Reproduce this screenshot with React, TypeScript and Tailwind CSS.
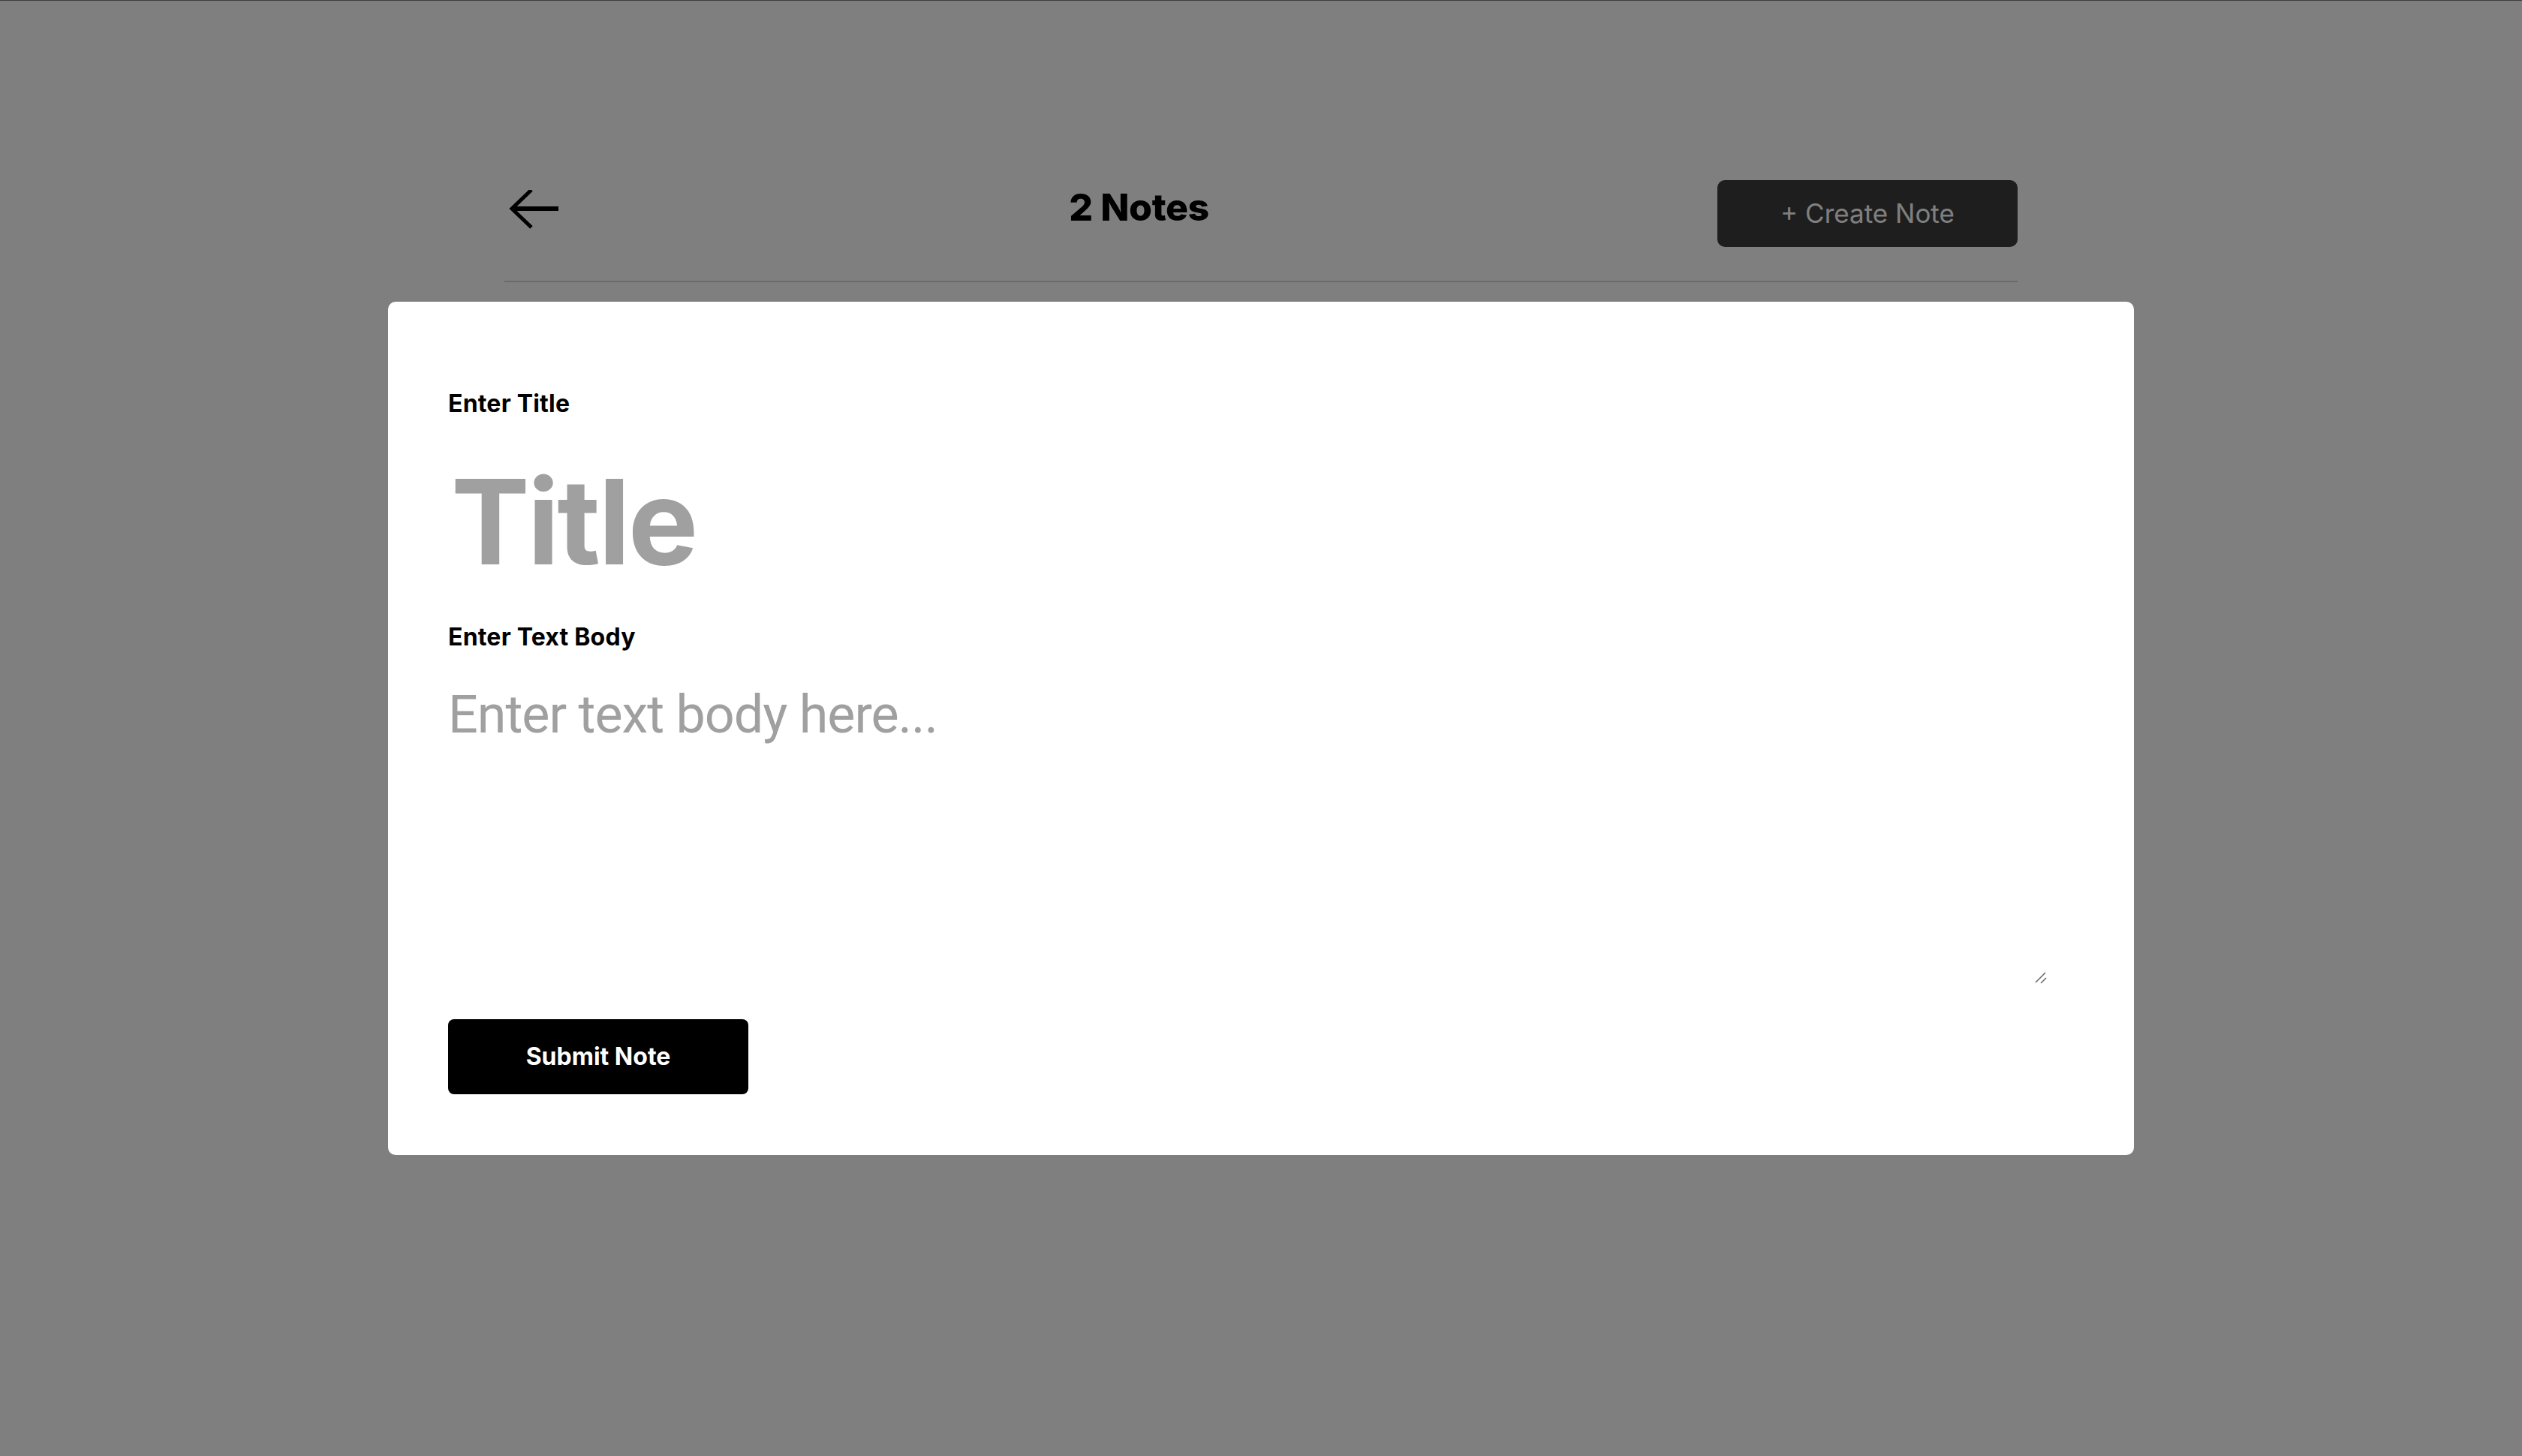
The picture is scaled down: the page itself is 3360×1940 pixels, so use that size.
import React from "react";

export default function App() {
  const inter = { fontFamily: "Inter, 'Liberation Sans', sans-serif" };
  return (
    <div className="relative h-screen w-full overflow-hidden bg-white" style={inter}>
      <div className="h-px w-full bg-[#7a7a7a]" />
      <div className="mx-auto w-[2016px] pt-[239px]">
        <div className="flex h-[89px] items-center justify-between">
          <svg width="72" height="56" viewBox="0 0 72 56" fill="none" className="mt-[-8px]">
            <path d="M72 25 L14 25" stroke="#000" strokeWidth="6" />
            <path d="M36 0 L10 25 L36 50" stroke="#000" strokeWidth="5" strokeLinejoin="miter" />
          </svg>
          <h1 className="ml-[3px] mt-[-18px] text-[50px] font-extrabold leading-none tracking-[-0.4px] text-black">2 Notes</h1>
          <button className="flex h-[89px] w-[400px] items-center justify-center rounded-[10px] bg-[#3c3c3c] text-[35px] text-white">
            + Create Note
          </button>
        </div>
        <div className="mt-[45px] h-[2px] w-full bg-[#d6d6d6]" />
      </div>

      <div className="fixed inset-0 flex items-center justify-center bg-[rgba(0,0,0,0.5)]">
        <div className="flex w-[2326px] flex-col rounded-[10px] bg-white pb-[81px] pl-[80px] pr-[80px] pt-[120px]">
          <label className="text-[32px] font-bold leading-none tracking-[0.2px] text-black">Enter Title</label>
          <input
            placeholder="Title"
            className="mt-[63px] ml-[4px] h-[157px] w-full bg-transparent text-[157px] font-bold leading-none tracking-[-3px] text-black outline-none placeholder:text-[#a0a0a0]"
          />
          <label className="mt-[59px] text-[32px] font-bold leading-none tracking-[0.2px] text-black">Enter Text Body</label>
          <div className="relative mt-[52px] h-[395px] w-[2132px]">
            <textarea
              placeholder="Enter text body here..."
              style={{ fontFamily: "Roboto, 'Liberation Sans', sans-serif" }}
              className="h-full w-full resize-none bg-transparent text-[70px] font-normal leading-none tracking-[-1px] text-black outline-none placeholder:text-[#a0a0a0]"
            />
            <svg
              width="16"
              height="16"
              viewBox="0 0 16 16"
              className="absolute bottom-[1px] right-[2px]"
              fill="none"
            >
              <path d="M1 14 L14 1" stroke="#6b6b6b" strokeWidth="1.6" />
              <path d="M8 15 L15 8" stroke="#6b6b6b" strokeWidth="1.6" />
            </svg>
          </div>
          <button className="mt-[46px] flex h-[100px] w-[400px] items-center justify-center rounded-[8px] bg-black text-[32px] font-bold text-white">
            Submit Note
          </button>
        </div>
      </div>
    </div>
  );
}
